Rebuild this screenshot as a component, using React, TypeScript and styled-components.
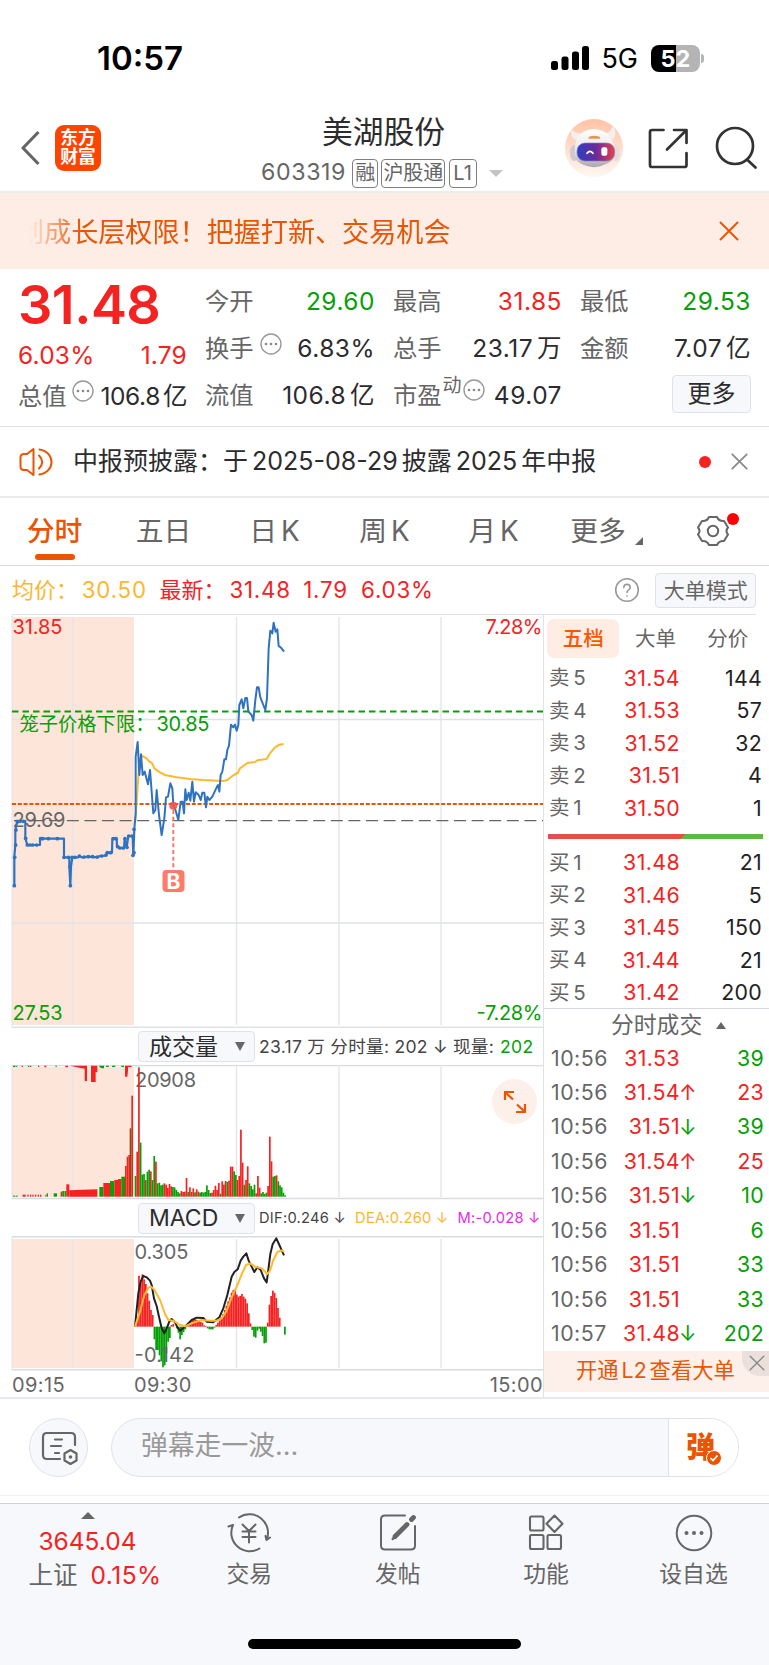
import React from "react";
import styled, { createGlobalStyle } from "styled-components";

const RED = "#f52222";
const GREEN = "#05a005";
const ORANGE = "#ea5504";
const GRAY = "#666";
const DARK = "#2c2c2e";
const LINE = "#e0e2ea";
const FONT = `Inter, "Noto Sans CJK SC", sans-serif`;

const GlobalStyle = createGlobalStyle`
  * { box-sizing: border-box; }
  body { margin: 0; background: #fff; }
  svg { display: block; flex: none; }
`;

const Screen = styled.main`
  width: 769px;
  height: 1665px;
  display: flex;
  flex-direction: column;
  overflow: hidden;
  background: #fff;
  color: ${DARK};
  font-family: ${FONT};
  line-height: 1;
  white-space: nowrap;
`;

/* status bar */
const StatusBar = styled.header`
  height: 101px;
  flex: none;
  padding: 15px 69px 0 97px;
  display: flex;
  align-items: center;
  justify-content: space-between;
  color: #000;
`;
const Clock = styled.span`
  font-size: 33px;
  font-weight: 600;
`;
const StatusIcons = styled.div`
  display: flex;
  align-items: center;
`;
const Network = styled.span`
  margin: 1px 13px 0 12px;
  font-size: 27px;
  font-weight: 400;
`;
const Battery = styled.div`
  position: relative;
  width: 49px;
  height: 27px;
  border-radius: 8px;
  background: linear-gradient(90deg, #000 52%, #b4b4b4 52%);
  color: #fff;
  font-size: 23.5px;
  font-weight: 700;
  line-height: 27px;
  text-align: center;
  &::after {
    content: "";
    position: absolute;
    right: -4px;
    top: 9px;
    width: 3px;
    height: 9px;
    border-radius: 0 3px 3px 0;
    background: #b4b4b4;
  }
`;

/* title bar */
const TitleBar = styled.div`
  height: 92px;
  flex: none;
  border-bottom: 2px solid #ececee;
  display: grid;
  grid-template-columns: 245px 300px 1fr;
`;
const TitleLeft = styled.div`
  display: flex;
  align-items: center;
  padding: 3px 0 0 20px;
`;
const AppLogo = styled.div`
  margin-left: 15px;
  width: 46px;
  height: 46px;
  border-radius: 9px;
  background: #ff4400;
  color: #fff;
  font-size: 17.8px;
  font-weight: 700;
  line-height: 19.5px;
  padding-top: 3px;
  text-align: center;
`;
const TitleCenter = styled.div`
  display: flex;
  flex-direction: column;
`;
const StockName = styled.h1`
  margin: 13px 23px 0 0;
  font-size: 30.8px;
  line-height: 36px;
  font-weight: 400;
  text-align: center;
`;
const CodeRow = styled.div`
  display: flex;
  align-items: center;
  margin-top: 8px;
  padding-left: 16px;
  height: 30px;
  gap: 3.2px;
  color: ${GRAY};
`;
const Code = styled.span`
  width: 88px;
  font-size: 23.2px;
  letter-spacing: 0.6px;
`;
const Tag = styled.span<{ $w: number }>`
  width: ${(p) => p.$w}px;
  height: 29px;
  border: 1.5px solid #808080;
  border-radius: 4px;
  font-size: 20px;
  line-height: 27px;
  text-align: center;
`;
const DropMark = styled.i`
  margin-left: 9px;
  border: 7px solid transparent;
  border-top-color: #c4c4c4;
  border-bottom: 0;
`;
const TitleRight = styled.div`
  display: flex;
  align-items: flex-start;
  padding: 18px 0 0 20px;
`;

/* ticker banner */
const Banner = styled.div`
  height: 76px;
  flex: none;
  background: #fdede5;
  display: flex;
  align-items: center;
  justify-content: space-between;
  padding: 0 30px 0 29px;
`;
const Ticker = styled.div`
  overflow: hidden;
  width: 600px;
  color: ${ORANGE};
  font-size: 27.1px;
  line-height: 40px;
  padding-top: 3px;
  mask-image: linear-gradient(90deg, transparent, #000 52px);
`;
const TickerText = styled.span`
  margin-left: -12px;
`;

/* quote summary */
const Quote = styled.section`
  height: 158px;
  flex: none;
  border-bottom: 1.5px solid ${LINE};
  padding: 9px 0 0 18px;
  display: flex;
  gap: 18px;
`;
const PriceColumn = styled.div`
  width: 169px;
`;
const BigPrice = styled.div`
  height: 54px;
  font-size: 54px;
  line-height: 54px;
  font-weight: 600;
  color: ${RED};
  letter-spacing: -0.5px;
`;
const ChangeRow = styled.div`
  height: 46px;
  margin-bottom: 2px;
  display: flex;
  align-items: center;
  justify-content: space-between;
  color: ${RED};
  font-size: 24.5px;
  letter-spacing: 0.2px;
`;
const QuoteGrid = styled.div`
  display: grid;
  grid-template-columns: 170px 169px 171px;
  grid-auto-rows: 46.8px;
  column-gap: 18px;
`;
const Cell = styled.div<{ $h?: number }>`
  display: flex;
  align-items: center;
  justify-content: space-between;
  ${(p) => p.$h && `height: ${p.$h}px;`}
`;
const CellLabel = styled.span`
  display: flex;
  align-items: center;
  color: ${GRAY};
  font-size: 24.3px;
`;
const Superscript = styled.small`
  margin: -18px 0 0 1px;
  font-size: 19px;
`;
const CellValue = styled.span<{ $c?: string; $s?: number }>`
  color: ${(p) => p.$c || DARK};
  font-size: 24.5px;
  letter-spacing: ${(p) => p.$s ?? 0.5}px;
  word-spacing: -3.5px;
`;
const MoreButton = styled.button`
  margin: 0 0 2px auto;
  width: 79px;
  height: 38px;
  padding: 0;
  border: 1.5px solid ${LINE};
  border-radius: 4px;
  background: #f7f8fb;
  font: 24px/34px ${FONT};
  color: ${DARK};
`;

/* notice */
const Notice = styled.div`
  height: 71px;
  flex: none;
  border-bottom: 2px solid #ebebee;
  display: flex;
  align-items: center;
  padding: 0 21px 0 19px;
`;
const NoticeText = styled.span`
  margin-left: 20px;
  flex: 1;
  font-size: 25px;
  word-spacing: -3px;
`;
const Dot = styled.i`
  width: 12px;
  height: 12px;
  margin-right: 20px;
  border-radius: 50%;
  background: ${RED};
`;

/* period tabs */
const Periods = styled.nav`
  height: 68px;
  flex: none;
  border-bottom: 1.5px solid #d5d8e0;
  display: grid;
  grid-template-columns: 109px 109px 113px 107px 111px 98px 1fr;
`;
const Period = styled.div<{ $on?: boolean }>`
  position: relative;
  display: flex;
  justify-content: center;
  align-items: center;
  font-size: 27.8px;
  word-spacing: -4px;
  color: ${(p) => (p.$on ? ORANGE : GRAY)};
  font-weight: ${(p) => (p.$on ? 500 : 400)};
  &::after {
    content: "";
    display: ${(p) => (p.$on ? "block" : "none")};
    position: absolute;
    left: 35px;
    bottom: 5px;
    width: 40px;
    height: 6px;
    border-radius: 3px;
    background: ${ORANGE};
  }
`;
const Corner = styled.i`
  position: absolute;
  right: 4px;
  bottom: 20px;
  border-left: 8px solid transparent;
  border-bottom: 8px solid ${GRAY};
`;
const Settings = styled.div`
  position: relative;
  padding: 17px 0 0 50px;
`;
const Badge = styled.i`
  position: absolute;
  left: 80px;
  top: 15px;
  width: 12px;
  height: 12px;
  border-radius: 50%;
  background: #ff0000;
`;

/* legend over the chart */
const Legend = styled.div`
  height: 49px;
  flex: none;
  margin: 0 13px 0 12px;
  border-bottom: 1.5px solid ${LINE};
  display: flex;
  align-items: center;
  font-size: 22.3px;
  color: ${RED};
`;
const LegendItem = styled.span<{ $w: number; $c?: string }>`
  width: ${(p) => p.$w}px;
  color: ${(p) => p.$c || RED};
  letter-spacing: 0.8px;
`;
const LegendLabel = styled(LegendItem)`
  font-size: 22px;
  letter-spacing: 0;
`;
const ModeButton = styled.button`
  margin-left: 15px;
  width: 101px;
  height: 35px;
  padding: 0;
  border: 1.5px solid ${LINE};
  border-radius: 4px;
  background: #f7f8fb;
  font: 21px/31px ${FONT};
  color: ${GRAY};
`;

/* main area */
const Trading = styled.section`
  height: 784px;
  flex: none;
  display: flex;
  border-bottom: 2px solid #e8e9ee;
`;
const ChartColumn = styled.div`
  width: 544px;
  border-right: 1.5px solid ${LINE};
  display: flex;
  flex-direction: column;
  padding-left: 11px;
`;
const IndicatorBar = styled.div<{ $h: number }>`
  height: ${(p) => p.$h}px;
  flex: none;
  display: flex;
  align-items: center;
  padding-left: 127px;
`;
const IndicatorSelect = styled.button`
  flex: none;
  width: 117px;
  height: 31px;
  padding: 0 9px 0 10px;
  border: 1.5px solid ${LINE};
  border-radius: 4px;
  background: #f7f8fb;
  display: flex;
  align-items: center;
  justify-content: space-between;
  font: 23px/28px ${FONT};
  color: ${DARK};
  &::after {
    content: "";
    border: 5px solid transparent;
    border-top: 9px solid ${GRAY};
    border-bottom: 0;
  }
`;
const IndicatorText = styled.span<{ $size: number; $c?: string; $ml: number }>`
  margin-left: ${(p) => p.$ml}px;
  color: ${(p) => p.$c || "#444"};
  font-size: ${(p) => p.$size}px;
  letter-spacing: 0.25px;
`;
const ChartBox = styled.div`
  position: relative;
`;
const FullscreenButton = styled.div`
  position: absolute;
  left: 481px;
  top: 14px;
  width: 45px;
  height: 45px;
  border-radius: 50%;
  background: #fdf0ea;
  display: grid;
  place-items: center;
`;
const TimeAxis = styled.div`
  height: 26px;
  display: flex;
  align-items: center;
  padding: 2px 0 0 1px;
  color: ${GRAY};
  font-size: 20px;
  letter-spacing: 0.4px;
`;
const AxisTime = styled.span`
  width: 122px;
  &:last-child { width: auto; margin-left: auto; }
`;

/* order book */
const BookColumn = styled.aside`
  flex: 1;
  display: flex;
  flex-direction: column;
`;
const BookTabs = styled.div`
  height: 47px;
  padding: 4px 0 0 3px;
  display: flex;
`;
const BookTab = styled.div<{ $on?: boolean }>`
  width: 72.3px;
  height: 39px;
  border-radius: 7px;
  background: ${(p) => (p.$on ? "#ffece3" : "none")};
  color: ${(p) => (p.$on ? "#ff5500" : GRAY)};
  font-size: 20.5px;
  font-weight: ${(p) => (p.$on ? 500 : 400)};
  line-height: 39px;
  text-align: center;
`;
const BookRow = styled.div`
  height: 32.5px;
  display: grid;
  grid-template-columns: 50px 81px 1fr;
  align-items: center;
  padding: 0 7px 0 5px;
  font-size: 21.3px;
`;
const Level = styled.span`
  color: ${GRAY};
  font-size: 20.5px;
  word-spacing: -2px;
`;
const Price = styled.span`
  color: ${RED};
  text-align: right;
  letter-spacing: 0.4px;
`;
const Qty = styled.span<{ $c?: string }>`
  color: ${(p) => p.$c || "#222"};
  text-align: right;
  letter-spacing: 0.3px;
`;
const Ratio = styled.div`
  height: 5px;
  margin: 9px 6px 8px 4px;
  background: linear-gradient(135deg, #ea4b4b 62.6%, #5bb946 62.6%);
`;
const DealsHeader = styled.div`
  margin-top: -1px;
  height: 33px;
  border-top: 1.5px solid #d5d8e0;
  display: flex;
  align-items: center;
  padding-left: 67px;
  font-size: 22.8px;
  color: ${GRAY};
  &::after {
    content: "";
    margin-left: 14px;
    border: 5.5px solid transparent;
    border-bottom: 7px solid ${GRAY};
    border-top: 0;
  }
`;
const DealRow = styled.div`
  height: 34.45px;
  display: grid;
  grid-template-columns: 60px 69px 23px 1fr;
  align-items: center;
  padding: 0 5px 0 7px;
  font-size: 21.3px;
`;
const DealTime = styled.span`
  color: ${GRAY};
  font-size: 21.3px;
  letter-spacing: 0.5px;
`;
const Arrow = styled.span<{ $c: string }>`
  color: ${(p) => p.$c};
  font-size: 21px;
  margin-left: -1px;
`;
const Promo = styled.div`
  position: relative;
  margin-top: auto;
  margin-bottom: 5px;
  height: 41px;
  background: #fdf0ea;
  color: ${ORANGE};
  font-size: 21.3px;
  line-height: 38px;
  padding-left: 32px;
  word-spacing: -3px;
`;
const PromoClose = styled.div`
  position: absolute;
  right: 0;
  top: 0;
  width: 27px;
  height: 25px;
  border-bottom-left-radius: 18px;
  background: #ebe0db;
  padding: 4px 0 0 7px;
`;

/* comment bar */
const CommentBar = styled.div`
  height: 105px;
  flex: none;
  padding: 19px 30px 0 29px;
  border-bottom: 1.5px solid #d0d2d6;
  display: flex;
  justify-content: space-between;
  background: linear-gradient(#fff 96px, #f0f0f2 96px, #f0f0f2 97px, #fff 97px);
`;
const RoundButton = styled.div`
  width: 59px;
  height: 59px;
  border: 1.2px solid ${LINE};
  border-radius: 50%;
  background: #f7f8fb;
  padding: 12px 0 0 11px;
`;
const CommentInput = styled.div`
  width: 628px;
  height: 59px;
  border: 1.2px solid ${LINE};
  border-radius: 30px;
  overflow: hidden;
  background: #f7f8fb;
  display: flex;
  color: #999;
  font-size: 26.8px;
`;
const Placeholder = styled.span`
  flex: 1;
  padding: 13px 0 0 29px;
`;
const BulletToggle = styled.div`
  position: relative;
  width: 70px;
  border-left: 1.2px solid ${LINE};
  background: #fff;
  color: ${ORANGE};
  font-size: 29px;
  font-weight: 900;
  line-height: 57px;
  padding-left: 17px;
  svg { position: absolute; left: 37px; top: 31px; }
`;

/* bottom bar */
const BottomNav = styled.nav`
  height: 126px;
  flex: none;
  background: #f7f8fb;
  display: grid;
  grid-template-columns: 175px 148.5px 148.5px 148px 147px;
`;
const IndexCell = styled.div`
  display: flex;
  flex-direction: column;
  align-items: center;
  color: ${RED};
  font-size: 24.5px;
  &::before {
    content: "";
    margin: 8px 0 10px 1px;
    border: 7px solid transparent;
    border-bottom: 7px solid ${GRAY};
    border-top: 0;
  }
`;
const IndexChange = styled.div`
  margin: 9px 0 0 15px;
  display: flex;
  align-items: center;
  gap: 13px;
  letter-spacing: 0.5px;
`;
const IndexName = styled.span`
  color: ${GRAY};
  letter-spacing: 0;
`;
const NavItem = styled.div`
  display: flex;
  flex-direction: column;
  align-items: center;
  padding-top: 9px;
  gap: 10px;
  color: ${GRAY};
  font-size: 22.8px;
`;
const HomeArea = styled.footer`
  flex: 1;
  background: #f7f8fb;
  display: flex;
  justify-content: center;
  padding-top: 9px;
`;
const HomeBar = styled.div`
  width: 273px;
  height: 10px;
  border-radius: 5px;
  background: #000;
`;

const Cross = ({ size, color, w }: { size: number; color: string; w: number }) => (
  <svg width={size} height={size} viewBox="0 0 20 20" stroke={color} strokeWidth={w} strokeLinecap="round">
    <path d="M1.5 1.5 18.5 18.5M18.5 1.5 1.5 18.5" />
  </svg>
);

const DotsIcon = styled.svg<{ $ml: number }>`
  margin: -9px 0 0 ${(p) => p.$ml}px;
`;
const MoreDots = ({ ml }: { ml: number }) => (
  <DotsIcon $ml={ml} width="22" height="22" viewBox="0 0 22 22" fill="none">
    <circle cx="11" cy="11" r="10" stroke="#999" strokeWidth="1.4" />
    <g fill="#888">
      <circle cx="6" cy="11" r="1.3" />
      <circle cx="11" cy="11" r="1.3" />
      <circle cx="16" cy="11" r="1.3" />
    </g>
  </DotsIcon>
);

const Robot = () => (
  <svg width="58" height="58" viewBox="0 0 174 174">
    <defs>
      <linearGradient id="halo" x2="0" y2="1">
        <stop stopColor="#ffc3a5" />
        <stop offset="1" stopColor="#fff7f3" />
      </linearGradient>
      <linearGradient id="visor">
        <stop stopColor="#2f3fc4" />
        <stop offset=".5" stopColor="#6a2a9c" />
        <stop offset="1" stopColor="#e8404c" />
      </linearGradient>
      <linearGradient id="shell" x2="0" y2="1">
        <stop stopColor="#fff" />
        <stop offset=".55" stopColor="#ebe7ea" />
        <stop offset="1" stopColor="#aaa4ad" />
      </linearGradient>
    </defs>
    <circle cx="87" cy="87" r="87" fill="url(#halo)" />
    <path d="M18 36Q17 58 34 64L52 42Q36 46 28 38Q24 32 18 36ZM146 24Q156 42 146 62L120 42Q138 42 140 28Q142 22 146 24Z" fill="#f3eff0" />
    <ellipse cx="27" cy="102" rx="12" ry="24" fill="#cfc9d0" />
    <ellipse cx="153" cy="104" rx="11" ry="23" fill="#e2dde0" />
    <path d="M30 84Q36 33 86 30Q138 33 148 84L151 112Q138 138 88 145Q40 140 29 114Z" fill="url(#shell)" />
    <path d="M72 53Q88 48 104 53L106 59H70Z" fill="#e99552" />
    <rect x="36" y="72" width="113" height="54" rx="24" fill="url(#visor)" stroke="#8a86b5" strokeWidth="2" />
    <path d="M66 103Q75 91 84 103" fill="none" stroke="#fff" strokeWidth="5" strokeLinecap="round" />
    <rect x="109" y="85" width="18" height="25" rx="6" fill="#fff" />
  </svg>
);

/* Chart drawings share a space of three units per pixel whose x origin lies one pixel left of the plot. */
const AUCTION_PATH =
  "M13 857 13 770 16 735 16 690 22 663 46 663 46 715 52 735 90 735 90 716 162 716 162 772 178 772 178 800 181 857 183 800 187 772 205 772 208 768 215 772 235 770 262 772 270 768 288 767 290 758 306 758 307 716 320 716 321 740 330 744 342 744 344 716 350 742 355 708 368 708 370 766 373 688";
const PRICE_PATH =
  "M373 688 377 640 377 470 383 426 388 525 393 463 398 525 404 515 414 553 420 510 430 640 436 630 440 570 447 645 455 705 463 655 468 592 474 590 481 550 487 565 490 615 497 632 505 660 512 605 518 605 522 640 526 568 530 600 536 578 541 602 547 545 552 605 557 577 566 585 572 600 577 578 583 578 588 622 592 590 598 600 607 590 620 562 624 555 628 575 632 525 637 515 643 478 648 478 652 450 657 437 663 374 670 382 675 374 680 392 685 375 688 315 695 298 700 325 706 294 711 294 715 335 725 345 730 362 736 300 741 262 746 262 751 292 760 315 766 330 771 295 776 145 781 92 787 100 791 68 797 95 802 88 806 138 813 143 822 155";
const AVG_PATH =
  "M376 665 383 560 388 480 397 468 410 475 418 485 426 489 433 505 450 517 465 525 500 532 540 537 580 540 640 543 652 540 668 527 683 519 690 505 712 489 735 486 742 481 770 477 780 460 795 442 808 434 821 432";
const QUOTE_DOTS: [number, number][] = [
  [13, 857], [14, 772], [17, 735], [18, 690], [22, 664], [30, 664], [40, 664], [47, 715], [52, 735], [60, 735], [68, 735], [80, 735],
  [92, 716], [98, 716], [115, 716], [142, 716], [162, 772], [175, 772], [180, 800], [181, 857], [186, 772], [195, 772], [208, 768],
  [222, 771], [235, 770], [248, 770], [262, 771], [275, 768], [288, 765], [292, 758], [302, 758], [310, 716], [318, 716], [323, 740],
  [330, 744], [340, 744], [345, 716], [351, 742], [356, 708], [366, 708], [372, 688], [372, 758], [369, 766],
];

const r = RED, g = GREEN;
const VOLUME: [number, string][] = [
  [62, g], [135, r], [388, r], [162, g], [66, g], [68, g], [50, r], [75, g], [81, g], [76, r], [50, g], [122, g], [105, r], [40, g],
  [42, g], [34, g], [36, g], [40, r], [36, r], [26, r], [38, r], [31, r], [29, g], [28, g], [20, g], [14, g], [10, g], [17, r], [14, r],
  [15, r], [56, r], [14, g], [28, r], [14, r], [25, r], [13, g], [22, r], [15, r], [12, g], [14, g], [12, g], [14, g], [34, g], [20, g],
  [11, g], [12, r], [20, r], [33, r], [20, r], [41, r], [9, g], [46, r], [36, r], [47, r], [44, g], [48, r], [90, r], [90, r], [76, g],
  [65, g], [50, r], [62, r], [201, r], [102, r], [36, g], [50, r], [91, r], [40, g], [32, g], [22, g], [36, g], [10, r], [62, r],
  [27, r], [10, g], [14, g], [8, g], [12, g], [32, r], [180, r], [106, r], [60, g], [62, g], [64, r], [46, g], [34, g], [28, g], [12, g], [4, g],
];
const AUCTION: [number, number, number, string][] = [
  [9, 6, 3, g], [17, 6, 3, g], [38, 9, 6, r], [52, 4, 6, r], [60, 4, 6, r], [67, 4, 6, r], [75, 4, 6, r], [83, 4, 6, r], [90, 4, 6, r],
  [106, 3, 6, r], [110, 4, 10, g], [131, 10, 10, g], [152, 5, 15, r], [157, 6, 17, g], [164, 5, 17, g], [169, 9, 37, r],
  [268, 12, 29, g], [280, 20, 41, r], [300, 13, 47, g], [313, 11, 50, r], [324, 10, 53, r], [334, 11, 60, g], [345, 5, 92, r],
  [350, 5, 120, r], [355, 5, 125, r], [359, 5, 205, "#7a5310"], [364, 5, 303, r],
];
const MACD = [
  0, 15, 153, 130, 157, 142, 128, 100, 78, 50, 35, -38, -70, -70, -86, -104, -122, -116, -80, -45, -34, 5, 8, 0, -5, -18, -38, -25, -16,
  -8, 3, 8, 13, 18, 26, 22, 20, 20, 14, 12, 4, 2, -5, -8, -8, -8, -3, 5, 12, 18, 28, 38, 50, 63, 76, 88, 102, 110, 112, 96, 90, 92,
  98, 90, 84, 70, 40, 10, -10, -30, -33, -12, -6, -15, -28, -50, -48, 12, 66, 92, 108, 102, 86, 56, 27, 0, 0, -24,
];

const Label = ({ x, y, c, w, end, children }: { x: number; y: number; c: string; w: number; end?: boolean; children: string }) => (
  <text x={x} y={y} fill={c} fontSize="20" fontFamily={FONT} textAnchor={end ? "end" : "start"} textLength={w}>
    {children}
  </text>
);

const Grid = ({ top, bottom }: { top: number; bottom: number }) => (
  <g>
    <rect x="12" y={top} width="122" height={bottom - top} fill="#fde5d9" />
    <path d={`M73 ${top}V${bottom}M236.5 ${top}V${bottom}M339 ${top}V${bottom}M441 ${top}V${bottom}`} stroke="#e2e6ec" strokeWidth="1.4" />
    <path d={`M12 ${top - 2}V${bottom + 2}`} stroke={LINE} strokeWidth="1" />
  </g>
);

const PriceChart = () => (
  <svg width="532" height="413" viewBox="11 615 532 413" fill="none">
    <Grid top={617} bottom={1025} />
    <path d="M12 719.5H544M12 923H544M12 1027.2H544" stroke={LINE} strokeWidth="1.4" />
    <path d="M12 711.5H544" stroke={GREEN} strokeWidth="2" strokeDasharray="6.5 4" />
    <path d="M12 804H544" stroke={ORANGE} strokeWidth="2" strokeDasharray="4 1.8" />
    <path d="M12 820.6H544" stroke={GRAY} strokeWidth="1.4" strokeDasharray="12 5.6" strokeDashoffset="-2" />
    <Label x={12.5} y={827} c={GRAY} w={53}>29.69</Label>
    <g transform="translate(10 600) scale(.33333)" strokeLinejoin="round">
      <path d={AVG_PATH} stroke="#feb92f" strokeWidth="6" />
      <path d={AUCTION_PATH} stroke="#2f72c0" strokeWidth="6.5" />
      <path d={PRICE_PATH} stroke="#2f72c0" strokeWidth="6" />
      {QUOTE_DOTS.map(([x, y], i) => (
        <circle key={i} cx={x} cy={y} r="5.6" fill="#2f72c0" />
      ))}
      <circle cx="490" cy="617" r="12" fill="#f2544a" fillOpacity=".9" />
      <path d="M490 630V808" stroke="#f87060" strokeWidth="5.5" strokeDasharray="12 8" />
    </g>
    <rect x="162.5" y="870" width="22" height="22" rx="4" fill="#fd7b69" />
    <text x="173.5" y="888.6" fill="#fff" fontSize="21" fontWeight="700" fontFamily={FONT} textAnchor="middle">B</text>
    <Label x={12.5} y={634} c={RED} w={50}>31.85</Label>
    <Label x={542.5} y={634} c={RED} w={57} end>7.28%</Label>
    <Label x={12.5} y={1019.5} c={GREEN} w={50}>27.53</Label>
    <Label x={542.5} y={1019.5} c={GREEN} w={66} end>-7.28%</Label>
    <text x="19.5" y="730.5" fill={GREEN} fontSize="19.3" fontFamily={FONT}>笼子价格下限：</text>
    <Label x={156.5} y={730.5} c={GREEN} w={53}>30.85</Label>
  </svg>
);

const VolumeChart = () => (
  <svg width="532" height="135" viewBox="11 1065 532 135" fill="none">
    <path d="M12 1065.5H544M12 1198.5H544" stroke="#d9dce3" strokeWidth="1.5" />
    <Grid top={1067} bottom={1197} />
    <Label x={135} y={1086.5} c={GRAY} w={61}>20908</Label>
    <g transform="translate(10 1060) scale(.33333)">
      <path d="M178 410V391L262 388V410Z" fill={RED} />
      {AUCTION.map(([x, w, h, c], i) => (
        <rect key={i} x={x} y={410 - h} width={w} height={h} fill={c} />
      ))}
      {VOLUME.map(([h, c], i) => (
        <rect key={i} x={374 + i * 5.1} y={410 - h} width="5.1" height={h} fill={c} />
      ))}
      <path d="M35 17h4v4h-4zM60 17h4v4h-4zM84 17h4v4h-4zM103 17h6v5h-6zM166 17h8v5h-8zM180 17H231V63H224V26L200 22ZM243 17H262V37H257V66H243ZM345 17H365V21H354V34L352 50H345Z" fill={RED} />
      <path d="M9 17h6v4H9zM16 17h6v3h-6zM54 17h4v4h-4zM136 17h5v3h-5zM268 17h14v8h-6l-8-4zM288 17h8v4h-8zM306 17h10v4h-10zM334 17h8v4h-8z" fill={GREEN} />
    </g>
  </svg>
);

const MacdChart = () => (
  <svg width="532" height="135" viewBox="11 1236 532 135" fill="none">
    <path d="M12 1236.7H544M12 1369.8H544" stroke="#d9dce3" strokeWidth="1.5" />
    <Grid top={1239} bottom={1368} />
    <g transform="translate(10 1060) scale(.33333)" strokeLinejoin="round">
      {MACD.map((h, i) => (
        <rect key={i} x={374 + i * 5.15} y={h > 0 ? 800 - h : 800} width="5.15" height={Math.abs(h)} fill={h > 0 ? RED : GREEN} />
      ))}
      <path d="M375 800 385 700 392 665 400 648 410 652 420 662 425 675 432 715 440 738 447 770 455 805 463 820 470 805 478 785 485 777 495 787 503 803 510 812 525 800 545 780 560 773 580 774 590 785 610 787 628 772 640 745 652 705 665 650 673 636 683 628 692 602 700 590 709 580 716 602 733 636 742 622 752 630 762 655 770 667 775 630 781 582 788 553 799 535 808 555 817 575 822 586" stroke="#222" strokeWidth="6" />
      <path d="M375 800 390 755 403 705 415 683 423 680 432 688 450 720 465 762 475 780 490 782 510 795 525 799 550 788 575 780 600 782 620 782 635 775 650 752 665 712 680 680 695 643 708 615 720 610 735 620 755 625 772 642 780 632 790 600 802 576 815 571 822 575" stroke="#feb92f" strokeWidth="6" />
    </g>
    <Label x={134.5} y={1258.5} c={GRAY} w={54}>0.305</Label>
    <Label x={134.5} y={1361.5} c={GRAY} w={60}>-0.142</Label>
  </svg>
);

const SELLS = [["卖 5", "31.54", "144"], ["卖 4", "31.53", "57"], ["卖 3", "31.52", "32"], ["卖 2", "31.51", "4"], ["卖 1", "31.50", "1"]];
const BUYS = [["买 1", "31.48", "21"], ["买 2", "31.46", "5"], ["买 3", "31.45", "150"], ["买 4", "31.44", "21"], ["买 5", "31.42", "200"]];
const DEALS: [string, string, string, string, string][] = [
  ["10:56", "31.53", "", "39", g], ["10:56", "31.54", "↑", "23", r], ["10:56", "31.51", "↓", "39", g], ["10:56", "31.54", "↑", "25", r],
  ["10:56", "31.51", "↓", "10", g], ["10:56", "31.51", "", "6", g], ["10:56", "31.51", "", "33", g], ["10:56", "31.51", "", "33", g],
  ["10:57", "31.48", "↓", "202", g],
];

const BookRows = ({ rows }: { rows: string[][] }) => (
  <>
    {rows.map(([level, price, qty]) => (
      <BookRow key={level}>
        <Level>{level}</Level>
        <Price>{price}</Price>
        <Qty>{qty}</Qty>
      </BookRow>
    ))}
  </>
);

export default function App() {
  return (
    <Screen>
      <GlobalStyle />
      <StatusBar>
        <Clock>10:57</Clock>
        <StatusIcons>
          <svg width="38" height="24" viewBox="0 0 38 24">
            <rect x="0" y="15" width="7" height="9" rx="2.5" />
            <rect x="10.5" y="10.5" width="7" height="13.5" rx="2.5" />
            <rect x="21" y="5.5" width="7" height="18.5" rx="2.5" />
            <rect x="31" y="0" width="7" height="24" rx="2.5" />
          </svg>
          <Network>5G</Network>
          <Battery>52</Battery>
        </StatusIcons>
      </StatusBar>

      <TitleBar>
        <TitleLeft>
          <svg width="20" height="36" viewBox="0 0 20 36" fill="none" stroke="#666" strokeWidth="3.2" strokeLinejoin="round">
            <path d="M18.5 2 3 18 18.5 34" />
          </svg>
          <AppLogo>东方<br />财富</AppLogo>
        </TitleLeft>
        <TitleCenter>
          <StockName>美湖股份</StockName>
          <CodeRow>
            <Code>603319</Code>
            <Tag $w={26}>融</Tag>
            <Tag $w={64}>沪股通</Tag>
            <Tag $w={28}>L1</Tag>
            <DropMark />
          </CodeRow>
        </TitleCenter>
        <TitleRight>
          <Robot />
          <svg width="146" height="58" viewBox="623 119 146 58" fill="none" stroke="#333" strokeWidth="2.7" strokeLinecap="round" strokeLinejoin="round">
            <path d="M663.5 130H652Q650 130 650 132V165Q650 167 652 167H684.5Q686.5 167 686.5 165V153M674 130H686.5V143M686 130.5 667 149.5" />
            <circle cx="735" cy="146" r="18" />
            <path d="M747 159.5 755.5 167.5" />
          </svg>
        </TitleRight>
      </TitleBar>

      <Banner>
        <Ticker><TickerText>创成长层权限！把握打新、交易机会</TickerText></Ticker>
        <Cross size={20} color={ORANGE} w={2} />
      </Banner>

      <Quote>
        <PriceColumn>
          <BigPrice>31.48</BigPrice>
          <ChangeRow><span>6.03%</span><span>1.79</span></ChangeRow>
          <Cell $h={32}><CellLabel>总值<MoreDots ml={5} /></CellLabel><CellValue $s={-0.4}>106.8 亿</CellValue></Cell>
        </PriceColumn>
        <QuoteGrid>
          <Cell><CellLabel>今开</CellLabel><CellValue $c={GREEN}>29.60</CellValue></Cell>
          <Cell><CellLabel>最高</CellLabel><CellValue $c={RED}>31.85</CellValue></Cell>
          <Cell><CellLabel>最低</CellLabel><CellValue $c={GREEN}>29.53</CellValue></Cell>
          <Cell><CellLabel>换手<MoreDots ml={6} /></CellLabel><CellValue>6.83%</CellValue></Cell>
          <Cell><CellLabel>总手</CellLabel><CellValue>23.17 万</CellValue></Cell>
          <Cell><CellLabel>金额</CellLabel><CellValue>7.07 亿</CellValue></Cell>
          <Cell><CellLabel>流值</CellLabel><CellValue>106.8 亿</CellValue></Cell>
          <Cell><CellLabel>市盈<Superscript>动</Superscript><MoreDots ml={1} /></CellLabel><CellValue>49.07</CellValue></Cell>
          <Cell><MoreButton>更多</MoreButton></Cell>
        </QuoteGrid>
      </Quote>

      <Notice>
        <svg width="34" height="28" viewBox="0 0 34 28" fill="none" stroke={ORANGE} strokeWidth="2" strokeLinejoin="round" strokeLinecap="round">
          <path d="M8 6H5Q1.5 6 1.5 9.5V18.5Q1.5 22 5 22H8L14.5 27V1ZM20 7.5Q26.5 14 20 20.5M20.5 1.5C36.5 4 36.5 24 20.5 26.5" />
        </svg>
        <NoticeText>中报预披露：于 2025-08-29 披露 2025 年中报</NoticeText>
        <Dot />
        <Cross size={17} color="#888" w={2} />
      </Notice>

      <Periods>
        <Period $on>分时</Period>
        <Period>五日</Period>
        <Period>日 K</Period>
        <Period>周 K</Period>
        <Period>月 K</Period>
        <Period>更多<Corner /></Period>
        <Settings>
          <svg width="32" height="32" viewBox="0 0 32 32" fill="none" stroke={GRAY} strokeWidth="2" strokeLinejoin="round">
            <path d="M12 2H20Q22 6.5 27 6L31 12.5Q28 16 31 19.5L27 26Q22 25.5 20 30H12Q10 25.5 5 26L1 19.5Q4 16 1 12.5L5 6Q10 6.5 12 2Z" />
            <circle cx="16" cy="16" r="5.2" />
          </svg>
          <Badge />
        </Settings>
      </Periods>

      <Legend>
        <LegendLabel $w={70} $c="#fdb62f">均价：</LegendLabel>
        <LegendItem $w={78} $c="#fdb62f">30.50</LegendItem>
        <LegendLabel $w={70}>最新：</LegendLabel>
        <LegendItem $w={74}>31.48</LegendItem>
        <LegendItem $w={58}>1.79</LegendItem>
        <LegendItem $w={254}>6.03%</LegendItem>
        <svg width="26" height="26" viewBox="0 0 26 26" fill="none" stroke="#999" strokeWidth="1.6" strokeLinecap="round">
          <circle cx="13" cy="13" r="11.3" />
          <path d="M9.8 10.6Q9.8 7.4 13 7.4T16.2 10.4Q16.2 12 14.4 13.1Q13 14 13 15.6M13 18.7V18.9" />
        </svg>
        <ModeButton>大单模式</ModeButton>
      </Legend>

      <Trading>
        <ChartColumn>
          <PriceChart />
          <IndicatorBar $h={37}>
            <IndicatorSelect>成交量</IndicatorSelect>
            <IndicatorText $size={17.6} $ml={4}>23.17 万 分时量: 202 ↓ 现量:</IndicatorText>
            <IndicatorText $size={17.6} $ml={6} $c={GREEN}>202</IndicatorText>
          </IndicatorBar>
          <ChartBox>
            <VolumeChart />
            <FullscreenButton>
              <svg width="24" height="24" viewBox="0 0 24 24" fill="none" stroke={ORANGE} strokeWidth="2.2">
                <path d="M2 10V2H11M2.5 2.5 10 9.5M22 14V22H13M21.5 21.5 14 14.5" />
              </svg>
            </FullscreenButton>
          </ChartBox>
          <IndicatorBar $h={36}>
            <IndicatorSelect>MACD</IndicatorSelect>
            <IndicatorText $size={14.7} $ml={4}>DIF:0.246 ↓</IndicatorText>
            <IndicatorText $size={14.7} $ml={9} $c="#fdb62f">DEA:0.260 ↓</IndicatorText>
            <IndicatorText $size={14.7} $ml={9} $c="#e82be8">M:-0.028 ↓</IndicatorText>
          </IndicatorBar>
          <MacdChart />
          <TimeAxis><AxisTime>09:15</AxisTime><AxisTime>09:30</AxisTime><AxisTime>15:00</AxisTime></TimeAxis>
        </ChartColumn>

        <BookColumn>
          <BookTabs>
            <BookTab $on>五档</BookTab>
            <BookTab>大单</BookTab>
            <BookTab>分价</BookTab>
          </BookTabs>
          <BookRows rows={SELLS} />
          <Ratio />
          <BookRows rows={BUYS} />
          <DealsHeader>分时成交</DealsHeader>
          {DEALS.map(([time, price, arrow, qty, color], i) => (
            <DealRow key={i}>
              <DealTime>{time}</DealTime>
              <Price>{price}</Price>
              <Arrow $c={color}>{arrow}</Arrow>
              <Qty $c={color}>{qty}</Qty>
            </DealRow>
          ))}
          <Promo>
            开通 L2 查看大单
            <PromoClose><Cross size={16} color="#888" w={1.8} /></PromoClose>
          </Promo>
        </BookColumn>
      </Trading>

      <CommentBar>
        <RoundButton>
          <svg width="38" height="36" viewBox="0 0 38 36" fill="none" stroke={GRAY} strokeWidth="2.2" strokeLinecap="round">
            <path d="M34 14V6Q34 2 30 2H6Q2 2 2 6V24Q2 28 6 28H19M14 8.5H21M10 15H20M14 22H18" />
            <path d="M29.5 19 35.5 22.5V29.5L29.5 33 23.5 29.5V22.5Z" strokeLinejoin="round" />
            <circle cx="29.5" cy="26" r="1.8" fill={GRAY} stroke="none" />
          </svg>
        </RoundButton>
        <CommentInput>
          <Placeholder>弹幕走一波...</Placeholder>
          <BulletToggle>
            弹
            <svg width="16" height="16" viewBox="0 0 16 16">
              <circle cx="8" cy="8" r="7.5" fill={ORANGE} stroke="#fff" />
              <path d="M4.5 8.2 7 10.5 11.5 5.5" fill="none" stroke="#fff" strokeWidth="1.8" />
            </svg>
          </BulletToggle>
        </CommentInput>
      </CommentBar>

      <BottomNav>
        <IndexCell>
          <span>3645.04</span>
          <IndexChange><IndexName>上证</IndexName>0.15%</IndexChange>
        </IndexCell>
        <NavItem>
          <svg width="44" height="40" viewBox="0 0 44 40" fill="none" stroke={GRAY} strokeWidth="2" strokeLinecap="round">
            <path d="M12 4.5A18.5 18.5 0 0 1 39.5 27M39.5 27 43 24.5M39.5 27 38.5 23M32.5 35.5A18.5 18.5 0 0 1 6 12M6 12 1.5 13.5" />
            <path d="M15.5 11.5 22 18 28.5 11.5M15.5 18.5H28.5M15.5 24H28.5M22 18V29.5" />
          </svg>
          交易
        </NavItem>
        <NavItem>
          <svg width="38" height="40" viewBox="0 0 38 40" fill="none" stroke={GRAY} strokeWidth="2" strokeLinecap="round">
            <path d="M26 2.5H6Q2 2.5 2 6.5V32.5Q2 36.5 6 36.5H32Q36 36.5 36 32.5V13" />
            <path d="M16 23.5 28 11.5M32.5 6.5 34.5 4.5" strokeWidth="4.8" />
            <path d="M13.8 26 16.5 23" strokeWidth="2.5" />
          </svg>
          发帖
        </NavItem>
        <NavItem>
          <svg width="38" height="40" viewBox="0 0 38 40" fill="none" stroke={GRAY} strokeWidth="2.1" strokeLinejoin="round">
            <rect x="3" y="3.5" width="13.5" height="14" rx="1.5" />
            <rect x="3" y="22" width="13.5" height="14" rx="1.5" />
            <rect x="20.5" y="22" width="13.5" height="14" rx="1.5" />
            <path d="M27.5 2.5 35.5 10.7 27.5 19 19.5 10.7Z" />
          </svg>
          功能
        </NavItem>
        <NavItem>
          <svg width="40" height="40" viewBox="0 0 40 40" fill="none" stroke={GRAY} strokeWidth="2">
            <circle cx="20" cy="20" r="17.3" />
            <g fill={GRAY} stroke="none">
              <circle cx="12.5" cy="20" r="2" />
              <circle cx="20" cy="20" r="2" />
              <circle cx="27.5" cy="20" r="2" />
            </g>
          </svg>
          设自选
        </NavItem>
      </BottomNav>
      <HomeArea><HomeBar /></HomeArea>
    </Screen>
  );
}
